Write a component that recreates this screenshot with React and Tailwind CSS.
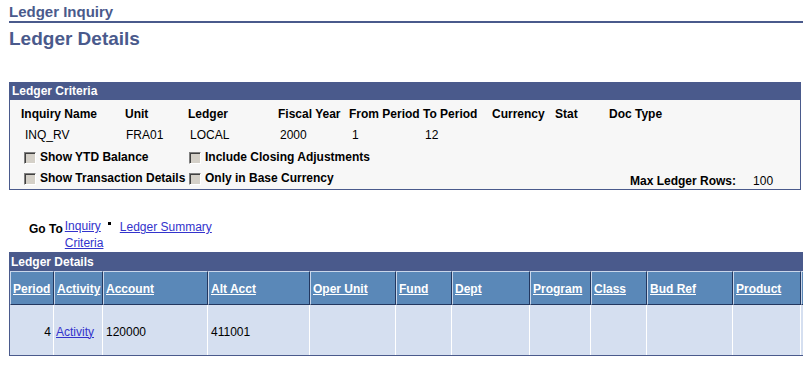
// Ledger Details inquiry page
const criteriaCols = [
    { label: 'Inquiry Name', value: 'INQ_RV', w: 'w-[104px]', pad: 'pl-[4px]' },
    { label: 'Unit', value: 'FRA01', w: 'w-[63px]', pad: 'pl-[1px]' },
    { label: 'Ledger', value: 'LOCAL', w: 'w-[90px]', pad: 'pl-[2px]' },
    { label: 'Fiscal Year', value: '2000', w: 'w-[71px]', pad: 'pl-[2px]' },
    { label: 'From Period', value: '1', w: 'w-[74px]', pad: 'pl-[3px]' },
    { label: 'To Period', value: '12', w: 'w-[69px]', pad: 'pl-[2px]' },
    { label: 'Currency', value: '', w: 'w-[63px]', pad: '' },
    { label: 'Stat', value: '', w: 'w-[54px]', pad: '' },
    { label: 'Doc Type', value: '', w: 'w-[120px]', pad: '' },
];

// last column runs off the page edge, its label is not visible
const gridCols = [
    { label: 'Period', w: 'w-[44px]' },
    { label: 'Activity', w: 'w-[49px]' },
    { label: 'Account', w: 'w-[105px]' },
    { label: 'Alt Acct', w: 'w-[102px]' },
    { label: 'Oper Unit', w: 'w-[86px]' },
    { label: 'Fund', w: 'w-[56px]' },
    { label: 'Dept', w: 'w-[78px]' },
    { label: 'Program', w: 'w-[61px]' },
    { label: 'Class', w: 'w-[56px]' },
    { label: 'Bud Ref', w: 'w-[86px]' },
    { label: 'Product', w: 'w-[68px]' },
    { label: '', w: 'w-[80px]' },
];

const Checkbox = ({ label }) => (
    <div className="flex items-center gap-[4px] h-[13px]">
        <span className="w-[12px] h-[12px] bg-[#d4d0c8] border border-t-[#808080] border-l-[#808080] border-b-white border-r-white shadow-[inset_1px_1px_0_#404040]" />
        <span className="font-bold leading-[13px]">{label}</span>
    </div>
);

const App = () => {
    return (
        <div
            className="w-[803px] h-[367px] overflow-hidden bg-white pl-[9px] text-[12px] text-black"
            style={{ fontFamily: '"Liberation Sans", Arial, sans-serif' }}
        >
            {/* Page titles */}
            <div className="pt-[3px] border-b-2 border-[#4a5a8c]">
                <div className="text-[15px] leading-[18px] font-bold text-[#4a5a8c]">Ledger Inquiry</div>
            </div>
            <h1 className="mt-[5px] text-[19px] leading-[22px] font-bold text-[#4a5a8c]">Ledger Details</h1>

            {/* Ledger Criteria */}
            <div className="mt-[32px] w-[792px] border border-[#4a5a8c] bg-[#f7f7f7]">
                <div className="h-[17px] bg-[#4a5a8c] text-white font-bold leading-[17px] pl-[2px]">Ledger Criteria</div>
                <div className="pl-[11px] pb-[1px]">
                    <div className="flex mt-[7px] leading-[14px] font-bold">
                        {criteriaCols.map((c) => (
                            <div key={c.label} className={`${c.w} shrink-0`}>{c.label}</div>
                        ))}
                    </div>
                    <div className="flex mt-[7px] leading-[14px]">
                        {criteriaCols.map((c) => (
                            <div key={c.label} className={`${c.w} ${c.pad} shrink-0`}>{c.value}</div>
                        ))}
                    </div>
                    <div className="flex mt-[9px] pl-[3px]">
                        <div className="w-[165px] shrink-0"><Checkbox label="Show YTD Balance" /></div>
                        <Checkbox label="Include Closing Adjustments" />
                    </div>
                    <div className="flex items-start mt-[8px] pl-[3px]">
                        <div className="w-[165px] shrink-0"><Checkbox label="Show Transaction Details" /></div>
                        <div className="w-[441px] shrink-0"><Checkbox label="Only in Base Currency" /></div>
                        <div className="flex mt-[2px] leading-[14px]">
                            <span className="font-bold">Max Ledger Rows:</span>
                            <span className="ml-[17px]">100</span>
                        </div>
                    </div>
                </div>
            </div>

            {/* Go To links */}
            <div className="flex items-start mt-[27px] pl-[20px]">
                <span className="mt-[4px] font-bold leading-[17px]">Go To</span>
                <div className="ml-[2px] w-[42px] leading-[17px] pt-[1px]">
                    <a href="#" className="text-[#3333cc] underline">Inquiry Criteria</a>
                </div>
                <span className="ml-[1px] mt-[5px] w-[3px] h-[3px] bg-black" />
                <a href="#" className="ml-[9px] mt-[2px] leading-[17px] text-[#3333cc] underline">Ledger Summary</a>
            </div>

            {/* Ledger Details grid */}
            <div className="w-[860px] border-l border-b border-[#4a5a8c]">
                <div className="h-[19px] bg-[#4a5a8c] text-white font-bold leading-[20px] pl-[1px]">Ledger Details</div>
                <div className="flex">
                    {gridCols.map((c, i) => (
                        <div
                            key={i}
                            className={`${c.w} shrink-0 h-[34px] flex items-center pl-[2px] pt-[2px] bg-[#5a88b8] border-t border-l border-t-[#c9d6ea] border-l-[#c9d6ea] border-r border-b border-r-[#23375f] border-b-[#23375f]`}
                        >
                            <a href="#" className="text-white font-bold underline">{c.label}</a>
                        </div>
                    ))}
                </div>
                <div className="flex">
                    {gridCols.map((c, i) => (
                        <div
                            key={i}
                            className={`${c.w} shrink-0 h-[50px] flex items-center pt-[3px] bg-[#d5dff0] border-r border-white ${i === 0 ? 'justify-end pr-[2px]' : i === 1 ? 'pl-[2px]' : 'pl-[3px]'}`}
                        >
                            {i === 0 && '4'}
                            {i === 1 && <a href="#" className="text-[#3333cc] underline">Activity</a>}
                            {i === 2 && '120000'}
                            {i === 3 && '411001'}
                        </div>
                    ))}
                </div>
            </div>
        </div>
    );
};

export default App;
